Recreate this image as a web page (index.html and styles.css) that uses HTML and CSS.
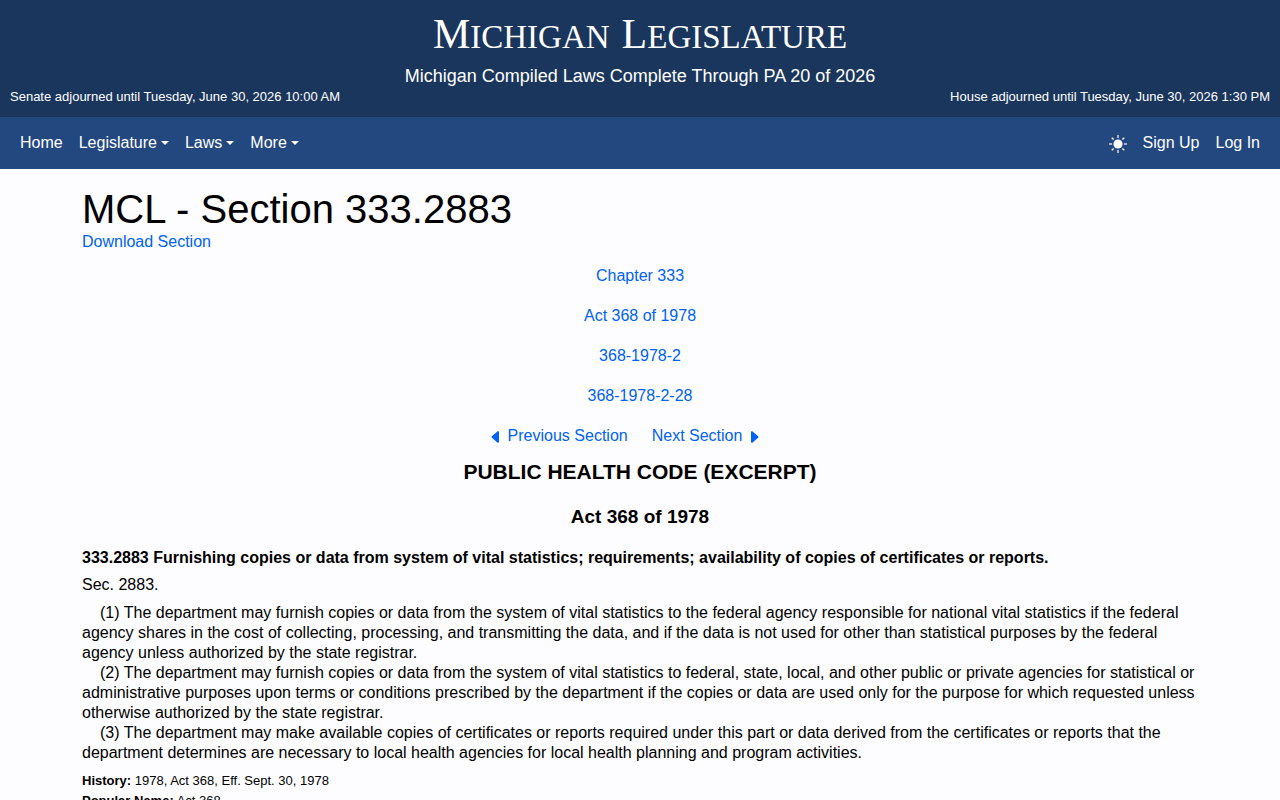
FILE: index.html
```html
<!DOCTYPE html>
<html lang="en">
<head>
  <meta charset="UTF-8">
  <meta name="viewport" content="width=device-width, initial-scale=1.0">
  <title>MCL - Section 333.2883 - Michigan Legislature</title>
  <link rel="stylesheet" href="styles.css">
</head>
<body>
  <header class="banner">
    <div class="site-title"><span class="word">Michigan</span> <span class="word">Legislature</span></div>
    <div class="currency">Michigan Compiled Laws Complete Through PA 20 of 2026</div>
    <div class="adjourned">
      <span>Senate adjourned until Tuesday, June 30, 2026 10:00 AM</span>
      <span>House adjourned until Tuesday, June 30, 2026 1:30 PM</span>
    </div>
  </header>

  <nav class="navbar">
    <div class="nav-group">
      <a class="nav-link" href="#">Home</a>
      <button type="button" class="nav-link dropdown">Legislature</button>
      <button type="button" class="nav-link dropdown">Laws</button>
      <button type="button" class="nav-link dropdown">More</button>
    </div>
    <div class="nav-group">
      <button type="button" class="nav-link theme-btn" aria-label="Toggle theme">
        <svg width="18" height="18" viewBox="0 0 18 18" fill="none" stroke="#fff">
          <circle cx="9" cy="9" r="4.6" fill="#fff" stroke="none"/>
          <path d="M9 0v3M9 15v3M0 9h3M15 9h3" stroke-width="2" opacity=".6"/>
          <path d="M2.8 2.8l1.8 1.8M13.4 13.4l1.8 1.8M2.8 15.2l1.8-1.8M13.4 4.6l1.8-1.8" stroke-width="1.4"/>
        </svg>
      </button>
      <a class="nav-link" href="#">Sign Up</a>
      <a class="nav-link" href="#">Log In</a>
    </div>
  </nav>

  <main class="container">
    <h1>MCL - Section 333.2883</h1>
    <a href="#">Download Section</a>

    <div class="parents">
      <a href="#">Chapter 333</a>
      <a href="#">Act 368 of 1978</a>
      <a href="#">368-1978-2</a>
      <a href="#">368-1978-2-28</a>
    </div>

    <div class="pager">
      <a href="#">
        <svg width="16" height="16" viewBox="0 0 16 16" fill="currentColor"><path d="m3.86 8.753 5.482 4.796c.646.566 1.658.106 1.658-.753V3.204a1 1 0 0 0-1.659-.753l-5.48 4.796a1 1 0 0 0 0 1.506z"/></svg>
        Previous Section
      </a>
      <a href="#">
        Next Section
        <svg width="16" height="16" viewBox="0 0 16 16" fill="currentColor"><path d="m12.14 8.753-5.482 4.796c-.646.566-1.658.106-1.658-.753V3.204a1 1 0 0 1 1.659-.753l5.48 4.796a1 1 0 0 1 0 1.506z"/></svg>
      </a>
    </div>

    <h2>PUBLIC HEALTH CODE (EXCERPT)</h2>
    <h3>Act 368 of 1978</h3>

    <article>
      <h4>333.2883 Furnishing copies or data from system of vital statistics; requirements; availability of copies of certificates or reports.</h4>
      <p class="section-no">Sec. 2883.</p>
      <p>(1) The department may furnish copies or data from the system of vital statistics to the federal agency responsible for national vital statistics if the federal agency shares in the cost of collecting, processing, and transmitting the data, and if the data is not used for other than statistical purposes by the federal agency unless authorized by the state registrar.</p>
      <p>(2) The department may furnish copies or data from the system of vital statistics to federal, state, local, and other public or private agencies for statistical or administrative purposes upon terms or conditions prescribed by the department if the copies or data are used only for the purpose for which requested unless otherwise authorized by the state registrar.</p>
      <p>(3) The department may make available copies of certificates or reports required under this part or data derived from the certificates or reports that the department determines are necessary to local health agencies for local health planning and program activities.</p>
      <div class="history">
        <div><b>History:</b> 1978, Act 368, Eff. Sept. 30, 1978</div>
        <div><b>Popular Name:</b> Act 368</div>
      </div>
    </article>
  </main>
</body>
</html>
```
FILE: styles.css
```css
* {
  box-sizing: border-box;
}
body {
  margin: 0;
  font-family: "Liberation Sans", Arial, sans-serif;
  font-size: 16px;
  line-height: 20px;
  color: #000;
  background: #fdfdff;
}
a {
  color: #0062f0;
  text-decoration: none;
}
a:hover {
  text-decoration: underline;
}

/* banner */
.banner {
  padding: 10px;
  color: #fff;
  background: #1a365d;
  text-align: center;
}
.site-title {
  display: flex;
  justify-content: center;
  gap: 12px;
  font-family: "Liberation Serif", serif;
  font-size: 33px;
  line-height: 48px;
  text-transform: uppercase;
}
.word::first-letter {
  font-size: 42px;
  line-height: 48px;
}
.currency {
  margin-top: 5px;
  font-size: 18px;
}
.adjourned {
  display: flex;
  justify-content: space-between;
  margin-top: 1px;
  font-size: 13px;
}

/* navigation */
.navbar {
  display: flex;
  justify-content: space-between;
  padding: 6px 12px;
  background: #22487f;
}
.nav-group {
  display: flex;
  align-items: center;
}
.nav-link {
  display: flex;
  align-items: center;
  padding: 8px;
  border: 0;
  background: none;
  color: #fff;
  font: inherit;
  line-height: 24px;
  cursor: pointer;
}
.dropdown::after {
  content: "";
  margin-left: 4px;
  border: 4px solid transparent;
  border-top-color: #fff;
  border-bottom: 0;
}
.theme-btn {
  padding-top: 10px;
}

/* page */
.container {
  max-width: 1140px;
  margin: 0 auto;
  padding: 20px 12px;
}
h1 {
  margin: 0 0 3px;
  font-size: 40px;
  line-height: 40px;
  font-weight: 400;
}
.parents {
  display: flex;
  flex-direction: column;
  align-items: center;
  gap: 20px;
  margin: 14px 0 20px;
}
.pager {
  display: flex;
  justify-content: center;
  gap: 24px;
  padding-right: 30px;
}
.pager a {
  display: flex;
  gap: 4px;
}
.pager svg {
  margin-top: 3px;
}
h2, h3 {
  text-align: center;
  line-height: 24px;
}
h2 {
  margin: 14px 0 21px;
  font-size: 21px;
}
h3 {
  margin: 0 0 19px;
  font-size: 19px;
}
h4 {
  margin: 0 0 7px;
  font-size: 16px;
}
p {
  margin: 0;
  text-indent: 18px;
}
.section-no {
  margin-bottom: 8px;
  text-indent: 0;
}
.history {
  margin-top: 8px;
  font-size: 13px;
}
```
